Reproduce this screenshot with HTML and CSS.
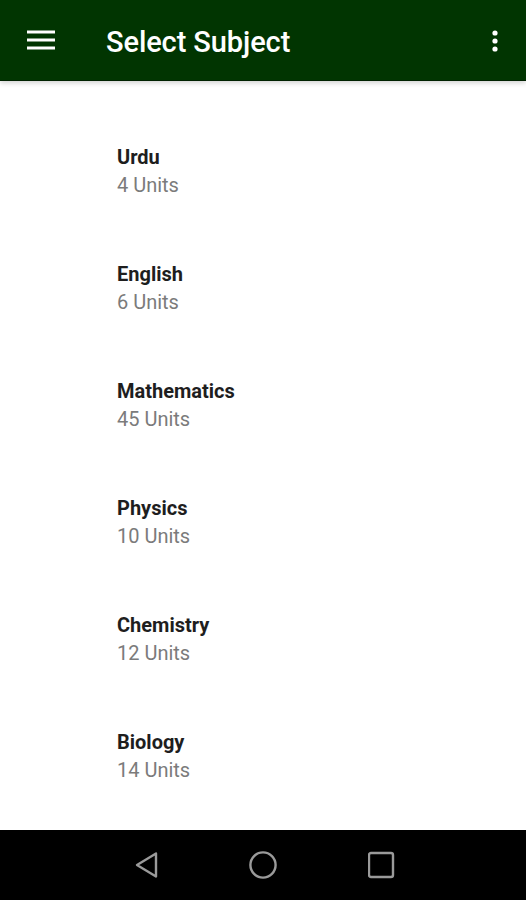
FILE: index.html
```html
<!DOCTYPE html>
<html lang="en">
<head>
  <meta charset="UTF-8"/>
  <meta name="viewport" content="width=device-width,initial-scale=1"/>
  <title>Select Subject</title>
  <link rel="stylesheet" href="styles.css">
</head>
<body>

  <div class="screen">
    <header class="toolbar">
      <button class="icon-btn menu" aria-label="Menu">
        <svg width="28" height="20" viewBox="0 0 28 20">
          <rect x="0" y="0.5" width="28" height="3" fill="#fff"/>
          <rect x="0" y="8.5" width="28" height="3" fill="#fff"/>
          <rect x="0" y="16.5" width="28" height="3" fill="#fff"/>
        </svg>
      </button>
      <h1 class="title">Select Subject</h1>
      <button class="icon-btn more" aria-label="More options">
        <svg width="6" height="22" viewBox="0 0 6 22">
          <circle cx="3" cy="3" r="2.6" fill="#fff"/>
          <circle cx="3" cy="11" r="2.6" fill="#fff"/>
          <circle cx="3" cy="19" r="2.6" fill="#fff"/>
        </svg>
      </button>
    </header>

    <!-- subject list -->
    <ul class="subjects">
      <li class="subject">
        <span class="name">Urdu</span>
        <span class="units">4 Units</span>
      </li>
      <li class="subject">
        <span class="name">English</span>
        <span class="units">6 Units</span>
      </li>
      <li class="subject">
        <span class="name">Mathematics</span>
        <span class="units">45 Units</span>
      </li>
      <li class="subject">
        <span class="name">Physics</span>
        <span class="units">10 Units</span>
      </li>
      <li class="subject">
        <span class="name">Chemistry</span>
        <span class="units">12 Units</span>
      </li>
      <li class="subject">
        <span class="name">Biology</span>
        <span class="units">14 Units</span>
      </li>
    </ul>

    <!-- android nav bar -->
    <nav class="navbar">
      <svg width="26" height="28" viewBox="0 0 26 28">
        <path d="M24 2.5 L5 14 L24 25.5 Z" fill="none" stroke="#9a9a9a" stroke-width="2.4" stroke-linejoin="round"/>
      </svg>
      <svg width="30" height="30" viewBox="0 0 30 30">
        <circle cx="15" cy="15" r="12.6" fill="none" stroke="#9a9a9a" stroke-width="2.4"/>
      </svg>
      <svg width="28" height="28" viewBox="0 0 28 28">
        <rect x="1" y="2" width="24" height="24" rx="2" fill="none" stroke="#9a9a9a" stroke-width="2.4"/>
      </svg>
    </nav>
  </div>

</body>
</html>
```

FILE: styles.css
```css
* { box-sizing: border-box; margin: 0; padding: 0; }

body {
  font-family: Roboto, "Noto Sans", Arial, sans-serif;
  background: #fff;
}

.screen {
  display: flex;
  flex-direction: column;
  height: 900px;
}

.toolbar {
  flex-shrink: 0;
  height: 80px;
  background: #013501;
  display: flex;
  align-items: center;
  padding: 0 27px;
  box-shadow: 0 1px 0 #012201, 0 3px 5px rgba(0,0,0,0.18);
  position: relative;
  z-index: 1;
}

.icon-btn {
  background: none;
  border: none;
  display: flex;
  align-items: center;
}

.title {
  flex: 1;
  margin-left: 51px;
  padding-top: 4px;
  color: #fff;
  font-size: 29px;
  font-weight: 500;
  letter-spacing: -0.1px;
}

.more {
  margin-right: 1px;
  padding-top: 2px;
}

.subjects {
  list-style: none;
  flex: 1;
  min-height: 0;
  overflow: hidden;
  padding: 64px 0 0 117px;
}

.subject {
  display: flex;
  flex-direction: column;
  height: 117px;
}

.name {
  font-size: 20px;
  font-weight: 700;
  color: #1e1e1e;
  line-height: 27px;
}

.units {
  font-size: 20px;
  color: #7b7b7b;
  line-height: 28px;
}

.navbar {
  flex-shrink: 0;
  height: 70px;
  background: #000;
  display: flex;
  align-items: center;
  justify-content: center;
  gap: 90px;
  padding-left: 2px;
}
```
